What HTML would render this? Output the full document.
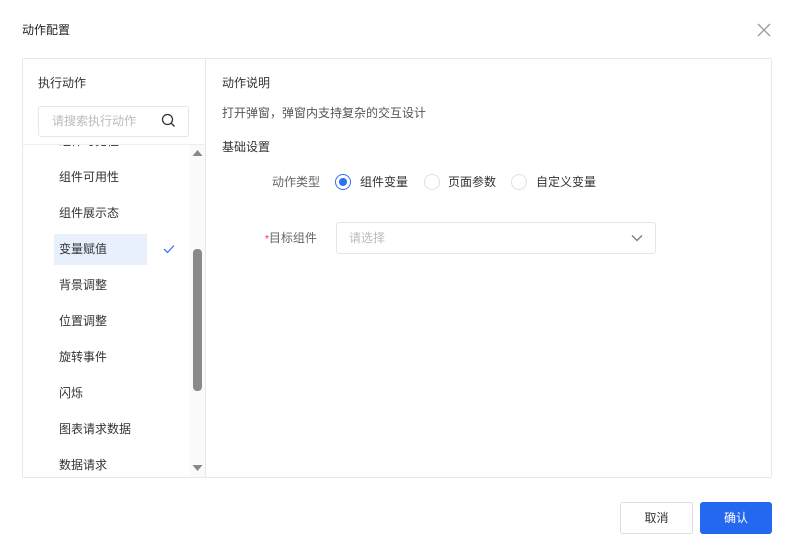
<!DOCTYPE html>
<html><head><meta charset="utf-8"><style>
*{box-sizing:border-box;margin:0;padding:0}
body{width:792px;height:554px;background:#fff;font-family:"Liberation Sans","Noto Sans CJK SC",sans-serif;font-size:12px;line-height:16px;color:#333;position:relative;overflow:hidden}
.a{position:absolute;white-space:nowrap}
.item{position:absolute;font-size:12px;color:#333;line-height:16px}
.radio{position:absolute;width:16px;height:16px;border:1px solid #e0e0e0;border-radius:50%}
</style></head><body>
<div class="a" style="left:22px;top:22px;color:#222">动作配置</div>
<svg class="a" style="left:757px;top:23px" width="14" height="14"><path d="M1 1L13 13M13 1L1 13" stroke="#999" stroke-width="1.3"/></svg>

<div class="a" style="left:22px;top:58px;width:750px;height:420px;border:1px solid #e8e8e8;border-radius:2px"></div>
<div class="a" style="left:205px;top:59px;width:1px;height:418px;background:#e8e8e8"></div>

<div class="a" style="left:38px;top:75px;color:#333">执行动作</div>
<div class="a" style="left:38px;top:106px;width:151px;height:31px;border:1px solid #e6e6e6;border-radius:3px"></div>
<div class="a" style="left:52px;top:113px;color:#bbb">请搜索执行动作</div>
<svg class="a" style="left:161px;top:113px" width="15" height="15"><circle cx="6.5" cy="6.5" r="5" fill="none" stroke="#333" stroke-width="1.3"/><path d="M10 10L13.5 13.5" stroke="#333" stroke-width="1.3"/></svg>
<div class="a" style="left:23px;top:144px;width:182px;height:1px;background:#eee"></div>

<div class="a" style="left:23px;top:145px;width:167px;height:332px;overflow:hidden">
<div class="item" style="left:36px;top:-12px">组件可见性</div>
<div class="item" style="left:36px;top:24px">组件可用性</div>
<div class="item" style="left:36px;top:60px">组件展示态</div>
<div class="a" style="left:31px;top:89px;width:93px;height:31px;background:#e8f0fe"></div>
<div class="item" style="left:36px;top:96px">变量赋值</div>
<svg class="a" style="left:140px;top:99px" width="12" height="10"><path d="M1 5L4.5 8.5L11 1.5" fill="none" stroke="#2b6ff5" stroke-width="1.2"/></svg>
<div class="item" style="left:36px;top:132px">背景调整</div>
<div class="item" style="left:36px;top:168px">位置调整</div>
<div class="item" style="left:36px;top:204px">旋转事件</div>
<div class="item" style="left:36px;top:240px">闪烁</div>
<div class="item" style="left:36px;top:276px">图表请求数据</div>
<div class="item" style="left:36px;top:312px">数据请求</div>
</div>
<div class="a" style="left:190px;top:145px;width:15px;height:332px;background:#fafafa"></div>
<svg class="a" style="left:192px;top:149px" width="11" height="8"><path d="M0.5 7L5.5 1L10.5 7Z" fill="#888"/></svg>
<div class="a" style="left:193px;top:249px;width:9px;height:142px;background:#8a8a8a;border-radius:4px"></div>
<svg class="a" style="left:192px;top:464px" width="11" height="8"><path d="M0.5 1L5.5 7L10.5 1Z" fill="#888"/></svg>

<div class="a" style="left:222px;top:75px;color:#333">动作说明</div>
<div class="a" style="left:222px;top:105px;color:#555">打开弹窗，弹窗内支持复杂的交互设计</div>
<div class="a" style="left:222px;top:139px;color:#333">基础设置</div>

<div class="a" style="left:272px;top:174px;color:#666">动作类型</div>
<div class="radio" style="left:335px;top:174px;border-color:#2b6ff5"></div>
<div class="a" style="left:339px;top:178px;width:8px;height:8px;border-radius:50%;background:#2b6ff5"></div>
<div class="a" style="left:360px;top:174px">组件变量</div>
<div class="radio" style="left:424px;top:174px"></div>
<div class="a" style="left:448px;top:174px">页面参数</div>
<div class="radio" style="left:511px;top:174px"></div>
<div class="a" style="left:536px;top:174px">自定义变量</div>

<div class="a" style="left:265px;top:230px;color:#666"><span style="color:#f5222d;font-size:10px">*</span>目标组件</div>
<div class="a" style="left:336px;top:222px;width:320px;height:32px;border:1px solid #e6e6e6;border-radius:3px"></div>
<div class="a" style="left:349px;top:230px;color:#bbb">请选择</div>
<svg class="a" style="left:631px;top:234px" width="12" height="8"><path d="M1 1.5L6 6.5L11 1.5" fill="none" stroke="#777" stroke-width="1.3"/></svg>

<div class="a" style="left:620px;top:502px;width:73px;height:32px;border:1px solid #ddd;border-radius:3px;text-align:center;line-height:30px;color:#333">取消</div>
<div class="a" style="left:700px;top:502px;width:72px;height:32px;background:#2468f2;border-radius:3px;text-align:center;line-height:32px;color:#fff">确认</div>
</body></html>
